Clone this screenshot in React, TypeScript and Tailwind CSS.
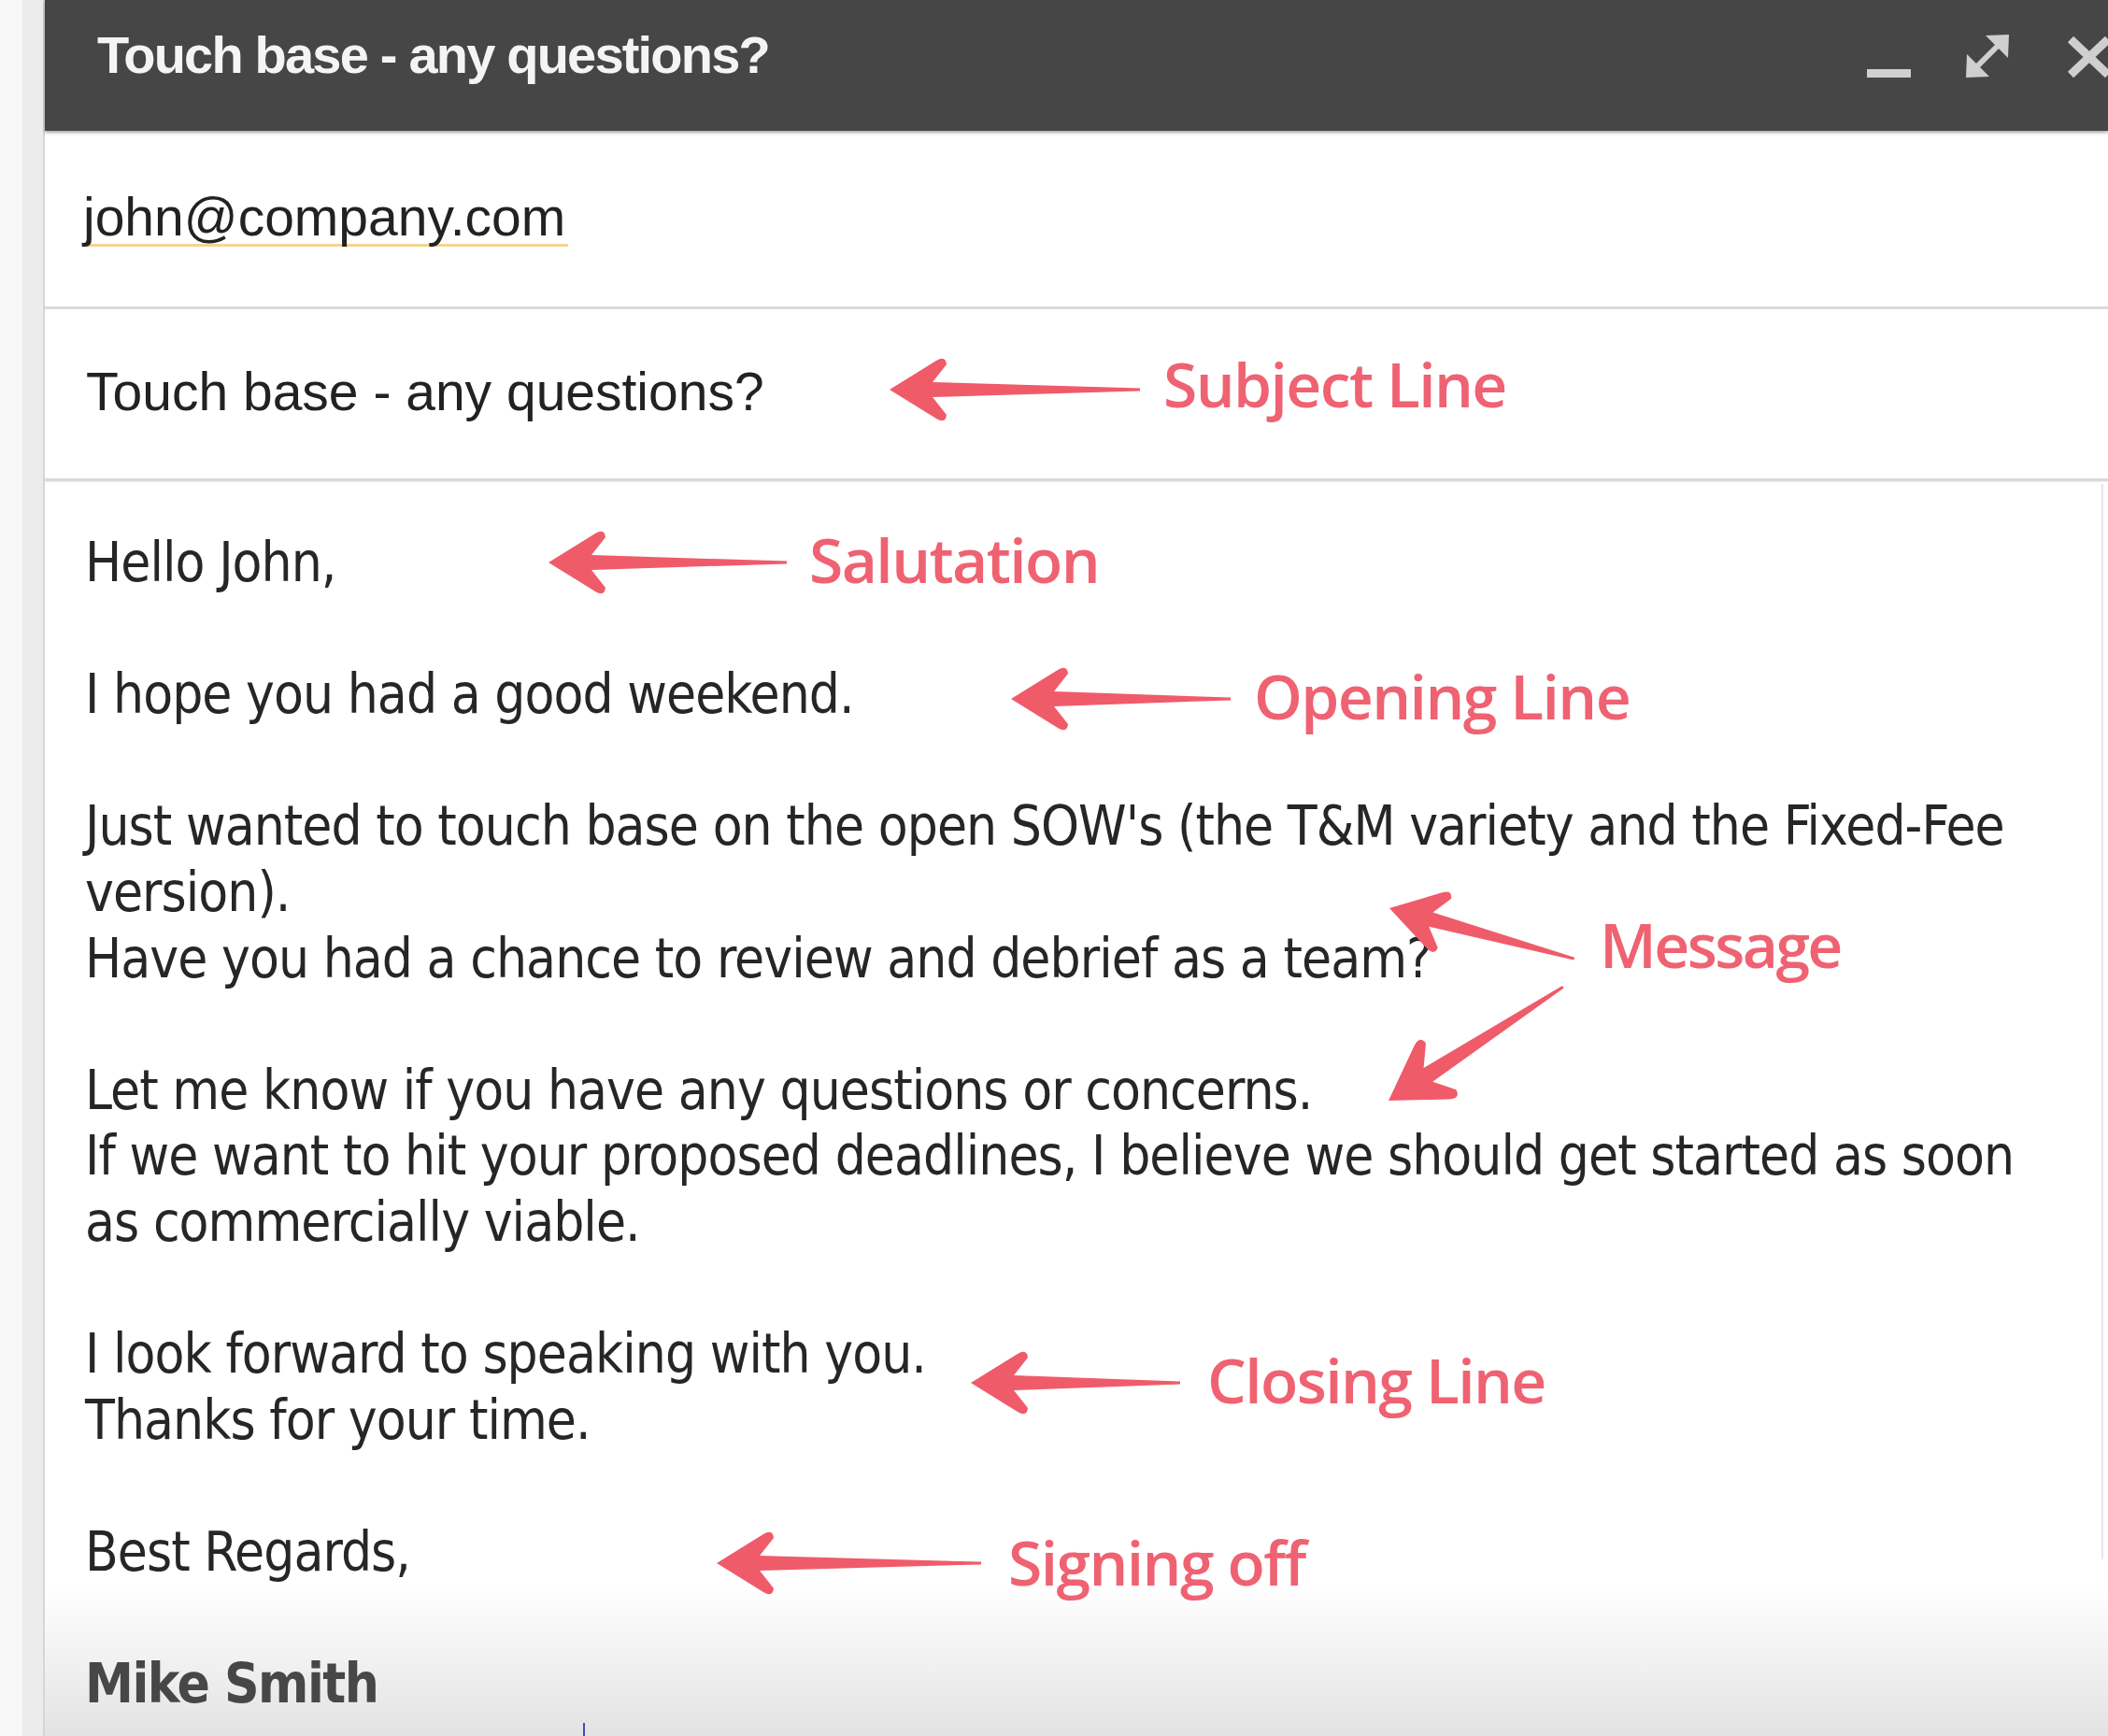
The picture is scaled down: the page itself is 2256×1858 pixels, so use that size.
import React from "react";

const ARROW = "#f05b6a";

function arrowPath(L: number, s = 1) {
  return `M0 0 L${50 * s} ${-31 * s} Q${60 * s} ${-37 * s} ${61 * s} ${-27 * s} L${46 * s} ${-8 * s} L${L} -1.4 L${L} 1.4 L${46 * s} ${8 * s} L${61 * s} ${27 * s} Q${60 * s} ${37 * s} ${50 * s} ${31 * s} Z`;
}

function HArrow({ w }: { w: number }) {
  return (
    <svg width={w} height={76} viewBox={`0 -38 ${w} 76`} className="shrink-0">
      <path d={arrowPath(w)} fill={ARROW} />
    </svg>
  );
}

const LABEL =
  "font-['Open_Sans',sans-serif] font-semibold text-[66px] leading-none tracking-[-1.6px] text-[#ef6272] whitespace-nowrap";

function Callout({ w, gap, label, lift = 8 }: { w: number; gap: number; label: string; lift?: number }) {
  return (
    <div className="flex items-center">
      <HArrow w={w} />
      <span className={LABEL} style={{ marginLeft: gap, marginBottom: lift }}>
        {label}
      </span>
    </div>
  );
}

const LINE = "h-[70.6px] leading-[70.6px] whitespace-nowrap";

export default function App() {
  return (
    <div className="relative flex h-[1858px] w-[2256px] overflow-hidden bg-white">
      <div className="pointer-events-none absolute bottom-0 left-0 right-0 z-0 h-[160px] bg-linear-to-b from-transparent to-[#e3e3e3]" />
      <div className="relative z-[1] w-[24px] shrink-0 bg-[#f8f8f8]" />
      <div className="relative z-[1] w-[22px] shrink-0 bg-[#ececec]" />
      <div className="relative z-[1] flex min-w-0 flex-1 flex-col border-l-2 border-[#d6d6d6]">
        {/* Header */}
        <div className="relative z-10 flex h-[140px] shrink-0 items-start bg-[#464646] shadow-[0_2px_3px_rgba(0,0,0,0.35)]">
          <div className="pl-[56px] pt-[31px] font-['Liberation_Sans',Arial,sans-serif] text-[56px] font-bold leading-none tracking-[-1.8px] text-[#f4f4f4] whitespace-nowrap">
            Touch base - any questions?
          </div>
          <div className="ml-auto -mr-[4px] flex items-start">
            <div className="mt-[74px] h-[9px] w-[47px] bg-[#cfcfcf]" />
            <svg width="46" height="46" viewBox="0 0 46 46" className="ml-[59px] mt-[37px]">
              <line x1="9" y1="37" x2="37" y2="9" stroke="#cfcfcf" strokeWidth="6" />
              <polygon points="21,1 46,0 45,25" fill="#cfcfcf" />
              <polygon points="1,21 0,46 25,45" fill="#cfcfcf" />
            </svg>
            <svg width="48" height="44" viewBox="0 0 48 44" className="ml-[62px] mt-[39px]">
              <line x1="4" y1="3" x2="44" y2="41" stroke="#cfcfcf" strokeWidth="9" />
              <line x1="44" y1="3" x2="4" y2="41" stroke="#cfcfcf" strokeWidth="9" />
            </svg>
          </div>
        </div>

        {/* Recipient row */}
        <div className="h-[188px] shrink-0 bg-white pl-[41px] pt-[64px] font-['Liberation_Sans',Arial,sans-serif] text-[57px] leading-none text-[#222]">
          <span className="inline-block border-b-[3px] border-[#f3d58f] pr-[3px]">john@company.com</span>
        </div>
        <div className="h-[3px] shrink-0 bg-[#dadada] shadow-[0_1px_2px_rgba(0,0,0,0.08)]" />

        {/* Subject row */}
        <div className="flex h-[181px] shrink-0 items-start bg-white pl-[44px] pt-[54px] font-['Liberation_Sans',Arial,sans-serif] text-[57px] leading-none text-[#222]">
          <span className="w-[860px] shrink-0 whitespace-nowrap pt-[6px]">Touch base - any questions?</span>
          <div className="-mt-[8px]">
            <Callout w={268} gap={25} label="Subject Line" lift={14} />
          </div>
        </div>
        <div className="h-[3px] shrink-0 bg-[#dadada] shadow-[0_1px_2px_rgba(0,0,0,0.08)]" />

        {/* Body */}
        <div className="flex flex-1 pl-[43px]">
          <div className="min-w-0 flex-1 pt-[52px] font-['DejaVu_Sans_Condensed','DejaVu_Sans',sans-serif] text-[58px] tracking-[-0.95px] text-[#262626]">
            <div className={`flex items-center ${LINE}`}>
              <span className="w-[496px] shrink-0">Hello John,</span>
              <Callout w={255} gap={24} label="Salutation" />
            </div>
            <div className={LINE} />
            <div className={`flex items-center ${LINE}`}>
              <span className="w-[991px] shrink-0">I hope you had a good weekend.</span>
              <div className="mt-[10px]">
                <Callout w={235} gap={25} label="Opening Line" />
              </div>
            </div>
            <div className={LINE} />
            <div className="relative">
              <div className={LINE}>
                Just wanted to touch base on the open SOW's (the T&amp;M variety and the Fixed-Fee
              </div>
              <div className={LINE}>version).</div>
              <div className={LINE}>Have you had a chance to review and debrief as a team?</div>
              <div className={LINE} />
              <div className={LINE}>Let me know if you have any questions or concerns.</div>
              <div className={LINE}>
                If we want to hit your proposed deadlines, I believe we should get started as soon
              </div>
              <div className={LINE}>as commercially viable.</div>

              <svg
                width="240"
                height="270"
                viewBox="0 0 240 270"
                className="pointer-events-none absolute left-[1379px] top-[92px]"
              >
                <path d={arrowPath(205)} fill={ARROW} transform="translate(17 31) rotate(15.3)" />
                <path d={arrowPath(223, 1.1)} fill={ARROW} transform="translate(16 237) rotate(-33.1)" />
              </svg>
              <span className={`absolute left-[1621px] top-[128px] ${LABEL} tracking-[-2.6px]`}>Message</span>
            </div>
            <div className={LINE} />
            <div className="flex items-center">
              <div className="w-[948px] shrink-0">
                <div className={LINE}>I look forward to speaking with you.</div>
                <div className={LINE}>Thanks for your time.</div>
              </div>
              <div className="-mt-[10px]">
                <Callout w={224} gap={29} label="Closing Line" />
              </div>
            </div>
            <div className={LINE} />
            <div className={`flex items-center ${LINE}`}>
              <span className="w-[676px] shrink-0">Best Regards,</span>
              <div className="mt-[24px]">
                <Callout w={283} gap={29} label="Signing off" lift={4} />
              </div>
            </div>
            <div className={LINE} />
            <div className={`${LINE} font-bold tracking-[-1.5px] text-[#474747]`}>Mike Smith</div>
            <div className="ml-[533px] mt-[6px] h-[30px] w-[2px] bg-[#3d4fc4]" />
          </div>
          <div className="mr-[5px] mt-[3px] h-[1151px] w-[2px] shrink-0 bg-[#e6e6e6]" />
        </div>
      </div>
    </div>
  );
}
